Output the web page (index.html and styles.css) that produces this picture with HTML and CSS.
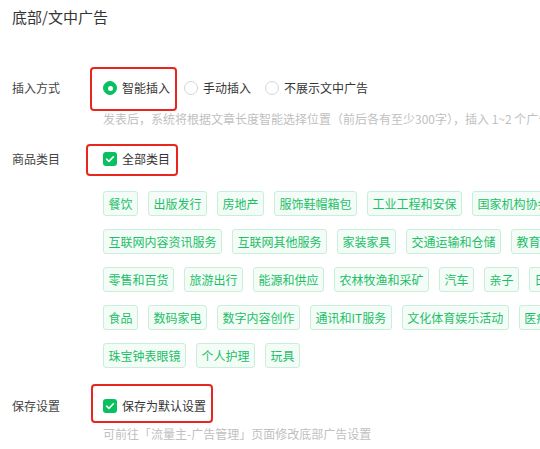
FILE: index.html
```html
<!DOCTYPE html>
<html lang="zh-CN">
<head>
<meta charset="utf-8">
<link rel="stylesheet" href="styles.css">
</head>
<body>
<div class="page">
  <div class="title">底部/文中广告</div>

  <div class="row row-insert">
    <div class="label">插入方式</div>
    <div class="ctrl">
      <span class="opt hl hl-a"><span class="radio on"></span><span>智能插入</span></span>
      <span class="opt"><span class="radio"></span><span>手动插入</span></span>
      <span class="opt"><span class="radio"></span><span>不展示文中广告</span></span>
    </div>
  </div>
  <div class="help help-a">发表后，系统将根据文章长度智能选择位置（前后各有至少300字），插入 1~2 个广告</div>

  <div class="row row-cat">
    <div class="label">商品类目</div>
    <div class="ctrl">
      <span class="opt hl hl-b"><span class="check"><svg viewBox="0 0 14 14" width="14" height="14"><path d="M3.6 7.2 L6 9.4 L10.4 4.8" fill="none" stroke="#fff" stroke-width="1.6" stroke-linecap="round" stroke-linejoin="round"/></svg></span><span>全部类目</span></span>
    </div>
  </div>

  <div class="tags">
    <div class="tag-row"><span class="tag">餐饮</span><span class="tag">出版发行</span><span class="tag">房地产</span><span class="tag">服饰鞋帽箱包</span><span class="tag">工业工程和安保</span><span class="tag">国家机构协会</span></div>
    <div class="tag-row"><span class="tag">互联网内容资讯服务</span><span class="tag">互联网其他服务</span><span class="tag">家装家具</span><span class="tag">交通运输和仓储</span><span class="tag">教育培训</span></div>
    <div class="tag-row"><span class="tag">零售和百货</span><span class="tag">旅游出行</span><span class="tag">能源和供应</span><span class="tag">农林牧渔和采矿</span><span class="tag">汽车</span><span class="tag">亲子</span><span class="tag">日用百货</span></div>
    <div class="tag-row"><span class="tag">食品</span><span class="tag">数码家电</span><span class="tag">数字内容创作</span><span class="tag">通讯和IT服务</span><span class="tag">文化体育娱乐活动</span><span class="tag">医疗健康</span></div>
    <div class="tag-row"><span class="tag">珠宝钟表眼镜</span><span class="tag">个人护理</span><span class="tag">玩具</span></div>
  </div>

  <div class="row row-save">
    <div class="label">保存设置</div>
    <div class="ctrl">
      <span class="opt hl hl-c"><span class="check"><svg viewBox="0 0 14 14" width="14" height="14"><path d="M3.6 7.2 L6 9.4 L10.4 4.8" fill="none" stroke="#fff" stroke-width="1.6" stroke-linecap="round" stroke-linejoin="round"/></svg></span><span>保存为默认设置</span></span>
    </div>
  </div>
  <div class="help help-b">可前往「流量主-广告管理」页面修改底部广告设置</div>
</div>
</body>
</html>
```

FILE: styles.css
```css
* { box-sizing: border-box; }
html, body {
  margin: 0;
  padding: 0;
  background: #fff;
  overflow: hidden;
}
body {
  width: 540px;
  height: 449px;
  font-family: "Noto Sans CJK SC", "Noto Sans", sans-serif;
  font-size: 12px;
  color: #353535;
}
.page {
  padding: 7px 0 0 12px;
  width: 700px;
}
.title {
  font-size: 15px;
  line-height: 20px;
  color: #353535;
}
.row {
  display: flex;
  align-items: center;
  height: 32px;
}
.row-insert { margin-top: 45px; }
.row-cat { margin-top: 16px; }
.row-save { margin-top: 22px; }
.label {
  width: 91px;
  flex: none;
  color: #444;
  line-height: 20px;
}
.ctrl {
  display: flex;
  align-items: center;
  gap: 14px;
  white-space: nowrap;
}
.opt {
  display: inline-flex;
  align-items: center;
  gap: 5px;
  height: 20px;
  line-height: 20px;
  color: #353535;
  position: relative;
}
.radio {
  width: 14px;
  height: 14px;
  border-radius: 50%;
  border: 1px solid #d6d6d6;
  background: #fff;
  flex: none;
  position: relative;
}
.radio.on {
  border-color: #07c160;
  background: #07c160;
}
.radio.on::after {
  content: "";
  position: absolute;
  left: 50%;
  top: 50%;
  width: 5px;
  height: 5px;
  margin: -2.5px 0 0 -2.5px;
  border-radius: 50%;
  background: #fff;
}
.check {
  width: 14px;
  height: 14px;
  border-radius: 3px;
  background: #07c160;
  flex: none;
  display: block;
}
.check svg { display: block; }
.hl::before {
  content: "";
  position: absolute;
  border: 2px solid #e8261d;
  border-radius: 4px;
  pointer-events: none;
}
.hl-a::before { left: -13px; right: -7px; top: -11px; bottom: -13px; }
.hl-b::before { left: -17px; right: -8px; top: -5px; bottom: -7px; }
.hl-c::before { left: -12px; right: -7px; top: -12px; bottom: -7px; }
.help {
  margin-left: 91px;
  line-height: 16px;
  color: #bfbfbf;
  white-space: nowrap;
}
.help-a { margin-top: 7px; }
.help-b { margin-top: 4px; }
.tags {
  margin: 16px 0 0 91px;
  display: flex;
  flex-direction: column;
  gap: 13px;
}
.tag-row {
  display: flex;
  gap: 10px;
  white-space: nowrap;
}
.tag {
  display: inline-block;
  height: 25px;
  line-height: 23px;
  padding: 0 4.5px;
  border: 1px solid #c7efd9;
  border-radius: 3px;
  background: #f4fcf8;
  color: #1bbf66;
  flex: none;
}
```
